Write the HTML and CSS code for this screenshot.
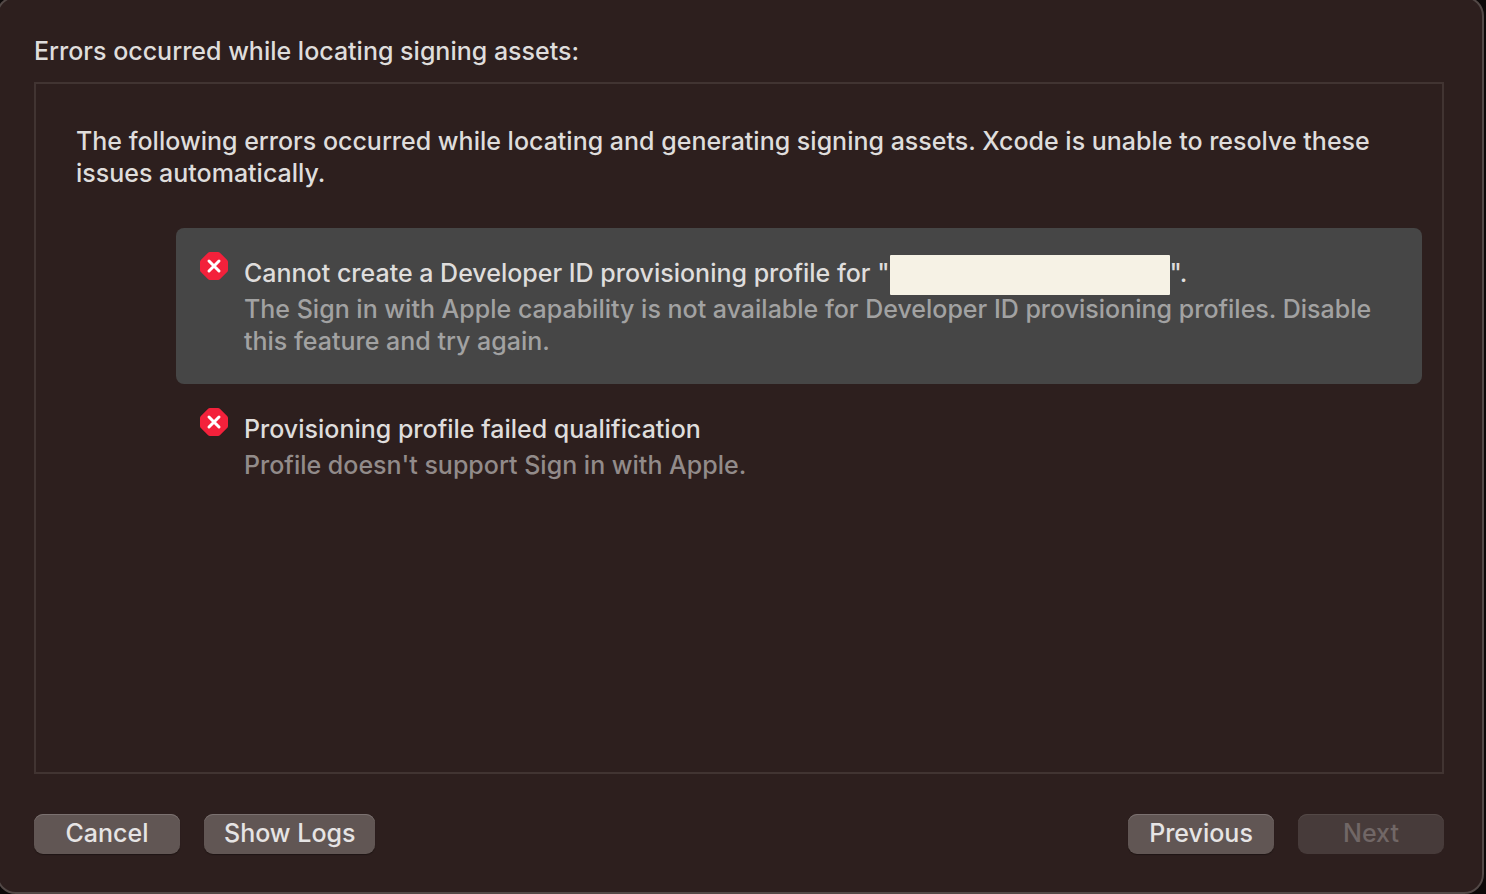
FILE: index.html
```html
<!DOCTYPE html>
<html lang="en">
  <head>
    <meta charset="UTF-8" />
    <meta name="viewport" content="width=device-width, initial-scale=1.0" />
    <title>Signing assets</title>
    <link rel="stylesheet" href="styles.css">
  </head>
  <body>
    <main class="dialog">
      <h1 class="dialog-title">Errors occurred while locating signing assets:</h1>

      <section class="panel">
        <p class="message">
          The following errors occurred while locating and generating signing
          assets. Xcode is unable to resolve these issues automatically.
        </p>

        <ul class="errors">
          <li class="error selected">
            <svg class="error-icon" viewBox="0 0 28 28" aria-hidden="true">
              <path class="badge" d="M10 3h8l7 7v8l-7 7h-8l-7-7v-8z" />
              <path class="cross" d="M9 9l10 10M19 9L9 19" />
            </svg>
            <div class="error-text">
              <h2>Cannot create a Developer ID provisioning profile for "<span class="redacted"></span>".</h2>
              <p>
                The Sign in with Apple capability is not available for Developer
                ID provisioning profiles. Disable this feature and try again.
              </p>
            </div>
          </li>
          <li class="error">
            <svg class="error-icon" viewBox="0 0 28 28" aria-hidden="true">
              <path class="badge" d="M10 3h8l7 7v8l-7 7h-8l-7-7v-8z" />
              <path class="cross" d="M9 9l10 10M19 9L9 19" />
            </svg>
            <div class="error-text">
              <h2>Provisioning profile failed qualification</h2>
              <p>Profile doesn't support Sign in with Apple.</p>
            </div>
          </li>
        </ul>
      </section>

      <footer class="actions">
        <button type="button">Cancel</button>
        <button type="button">Show Logs</button>
        <button type="button" class="previous">Previous</button>
        <button type="button" disabled>Next</button>
      </footer>
    </main>
  </body>
</html>
```
FILE: styles.css
```css
* {
  margin: 0;
  padding: 0;
  box-sizing: border-box;
}

body {
  height: 100vh;
  display: flex;
  overflow: hidden;
  background-color: #0d0909;
  color: #dfdddc;
  font-family: Inter, "Liberation Sans", sans-serif;
  font-size: 25px;
  font-weight: 500;
  line-height: 32px;
}

h1,
h2 {
  font-size: 25px;
  font-weight: 500;
}

/* The window frame runs past the top and left edges of the screen */
.dialog {
  flex: 1;
  display: flex;
  flex-direction: column;
  margin: -4px 2px 0 -4px;
  padding: 37px 38px 38px 36px;
  border: 2px solid #524846;
  border-radius: 20px;
  background-color: #2d1f1e;
}

.panel {
  flex: 1;
  margin: 15px 0 40px;
  padding: 41px 20px;
  border: 2px solid #413432;
}

.message {
  padding: 0 20px;
}

.errors {
  list-style: none;
  margin: 39px 0 0 120px;
}

.error {
  display: flex;
  gap: 16px;
  padding: 24px;
  border-radius: 8px;
}

.error.selected {
  background-color: #464646;
}

.error-icon {
  flex: none;
  width: 28px;
  height: 28px;
}

.badge {
  fill: #f3213b;
  stroke: #f3213b;
  stroke-width: 6;
  stroke-linejoin: round;
}

.cross {
  fill: none;
  stroke: #fff;
  stroke-width: 3;
  stroke-linecap: round;
}

.error-text {
  display: grid;
  gap: 4px;
  padding: 5px 0 3px;
}

.error-text h2 {
  height: 32px;
}

.error-text p {
  color: #928b8a;
}

.selected p {
  color: #a2a2a2;
}

.redacted {
  display: inline-block;
  width: 280px;
  height: 40px;
  margin: -4px 0;
  border-radius: 1px;
  background-color: #f6f2e5;
  vertical-align: middle;
}

.actions {
  display: flex;
  gap: 24px;
}

button {
  min-width: 146px;
  height: 40px;
  padding: 0 20px 2px;
  border: none;
  border-radius: 9px;
  background-color: #615654;
  box-shadow: inset 0 1px #7b7170, 0 1px 1px #1f1514;
  color: #e6e4e4;
  font: inherit;
}

button:disabled {
  background-color: #473b3a;
  box-shadow: inset 0 1px #534846;
  color: #716766;
}

.previous {
  margin-left: auto;
}
```
